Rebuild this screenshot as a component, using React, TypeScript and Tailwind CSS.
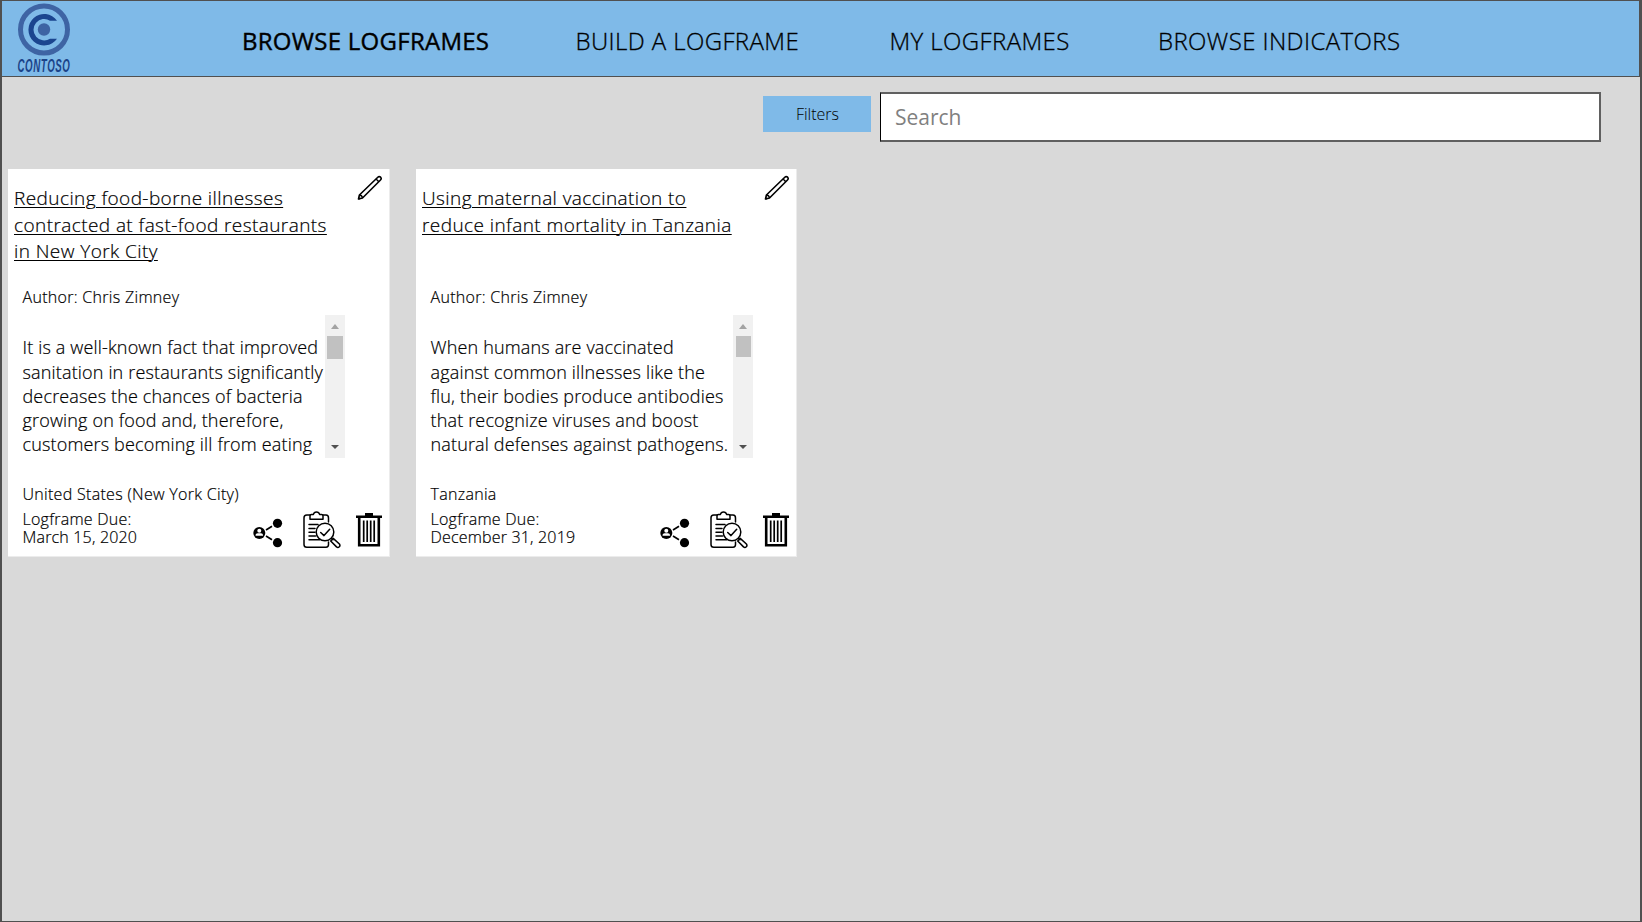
import React from "react";

type Logframe = {
  title: string[];
  author: string;
  description: string[];
  place: string;
  due: string;
  width: string;
  thumb: string;
};

const logframes: Logframe[] = [
  {
    title: ["Reducing food-borne illnesses", "contracted at fast-food restaurants", "in New York City"],
    author: "Chris Zimney",
    description: [
      "It is a well-known fact that improved",
      "sanitation in restaurants significantly",
      "decreases the chances of bacteria",
      "growing on food and, therefore,",
      "customers becoming ill from eating",
    ],
    place: "United States (New York City)",
    due: "March 15, 2020",
    width: "w-[382px]",
    thumb: "h-[23px] w-4",
  },
  {
    title: ["Using maternal vaccination to", "reduce infant mortality in Tanzania"],
    author: "Chris Zimney",
    description: [
      "When humans are vaccinated",
      "against common illnesses like the",
      "flu, their bodies produce antibodies",
      "that recognize viruses and boost",
      "natural defenses against pathogens.",
    ],
    place: "Tanzania",
    due: "December 31, 2019",
    width: "w-[381px]",
    thumb: "h-[21px] w-[15px]",
  },
];

function Logo() {
  return (
    <svg width="58" height="76" viewBox="0 0 58 76" className="block">
      <circle cx="28" cy="28.5" r="23.5" fill="none" stroke="#3e64a4" strokeWidth="5" />
      <path d="M41 19.700A15.700 15.700 0 1 0 41 37.700H34A10.700 10.700 0 1 1 34 19.700Z" fill="#1b458f" />
      <circle cx="28" cy="28.500" r="6.200" fill="#3e64a4" />
      <text transform="translate(1.500 70.500) scale(.54 1)" textLength="97" lengthAdjust="spacing" fontFamily="Liberation Sans" fontWeight="700" fontStyle="italic" fontSize="18" fill="#1b4388">CONTOSO</text>
    </svg>
  );
}

function PencilIcon() {
  return (
    <svg width="26" height="26" viewBox="0 0 26 26" fill="none" stroke="#000" strokeLinejoin="round">
      <path d="M1.500 24 2.400 20 20.800 2.200Q22.200 .9 23.600 2.200 24.900 3.700 23.500 5L5.500 23Z" strokeWidth="1.600" />
      <path d="M2.400 20Q5.100 20.200 5.500 23M19.400 3.600Q20 6.200 22.100 6.300" strokeWidth="1.300" />
      <circle cx="2.300" cy="23.400" r="1" fill="#000" stroke="none" />
    </svg>
  );
}

function ShareIcon() {
  return (
    <svg width="30" height="30" viewBox="0 0 30 30">
      <path d="M13 12 19 8.300M13 18 19 21.700" stroke="#000" strokeWidth="1.700" />
      <circle cx="6.300" cy="15" r="6" />
      <circle cx="6.300" cy="12.700" r="2" fill="#fff" />
      <path d="M2.600 17.800V16.800Q2.800 15.200 4.600 15.200H8Q9.800 15.200 10 16.800V17.800Z" fill="#fff" />
      <circle cx="24.500" cy="5.300" r="4.600" />
      <circle cx="24.500" cy="24.700" r="4.600" />
    </svg>
  );
}

function ReviewIcon() {
  return (
    <svg width="38" height="38" viewBox="0 0 38 38" fill="none" stroke="#000" strokeWidth="1.500" strokeLinecap="round" strokeLinejoin="round">
      <path d="M7 4H3.800Q1 4 1 6.800V33.400Q1 36.200 3.800 36.200H23Q25.500 36.200 25.500 33.600V31M20 4H23Q25.500 4 25.500 7V11" />
      <path d="M7 8.300V4.800Q7 3.400 8.400 3.400H10.400Q11 .9 13.500 .9T16.600 3.400H18.600Q20 3.400 20 4.800V8.300Z" />
      <path d="M6 13.600H15M6 17.500H12M6 21.200H12M6 25H12.500M6 28.800H17" />
      <circle cx="22" cy="21" r="8.800" fill="#fff" />
      <path d="M17.700 21.500 21 24.600 26.700 18.200M28.400 27.300 30 28.700" />
      <path d="M30.200 27.400 36.400 33Q37.500 34.500 36.300 35.800 35 37 33.500 35.900L27.700 30Z" />
    </svg>
  );
}

function TrashIcon() {
  return (
    <svg width="26" height="34" viewBox="0 0 26 34">
      <path d="M0 2.500H9V0H17V2.500H26V5H0Z" />
      <path d="M3.200 5V32.300H22.800V5" fill="none" stroke="#000" strokeWidth="2.600" />
      <path d="M7.700 7.500V29M11.200 7.500V29M14.700 7.500V29M18.200 7.500V29" stroke="#000" strokeWidth="1.700" />
    </svg>
  );
}

function ScrollBar({ thumb }: { thumb: string }) {
  return (
    <div className="flex h-[143px] w-5 flex-col items-center bg-[#f1f1f1]">
      <svg width="10" height="5" viewBox="0 0 10 5" className="mt-[9px] shrink-0">
        <path d="M5 0 9 5H1Z" fill="#a3a3a3" />
      </svg>
      <div className={`mt-[7px] bg-[#c1c1c1] ${thumb}`} />
      <svg width="8" height="4" viewBox="0 0 8 4" className="mt-auto mb-[9px] shrink-0">
        <path d="M0 0H8L4 4Z" fill="#505050" />
      </svg>
    </div>
  );
}

function Card({ item }: { item: Logframe }) {
  return (
    <article className={`flex h-[388px] flex-col border-r border-b border-[#ececec] bg-white ${item.width}`}>
      <div className="flex h-[112px] justify-between">
        <h2 className="pt-[16.300px] pl-[6px] text-[19px] leading-[26.400px] tracking-[0.420px] whitespace-nowrap underline decoration-1 underline-offset-2 [-webkit-text-stroke:0.2px]">
          {item.title.map((line) => (
            <div key={line}>{line}</div>
          ))}
        </h2>
        <button className="mt-[6px] mr-[6.500px] h-[26px] w-[26px]" aria-label="Edit">
          <PencilIcon />
        </button>
      </div>
      <p className="h-[34px] pl-[14.500px] text-[16px] leading-8 tracking-[0.3px] [-webkit-text-stroke:0.2px]">Author: {item.author}</p>
      <div className="flex h-[143px] pl-[14.500px]">
        <p className="w-[302.500px] pt-[20px] text-[18px] leading-[24px] tracking-[0.160px] whitespace-nowrap [-webkit-text-stroke:0.2px]">
          {item.description.map((line) => (
            <span key={line} className="block first:mb-px">{line}</span>
          ))}
        </p>
        <ScrollBar thumb={item.thumb} />
      </div>
      <div className="flex flex-1 justify-between pl-[14.500px]">
        <div className="pt-[26px] text-[16px] leading-[18px] tracking-[0.250px] whitespace-nowrap [-webkit-text-stroke:0.2px]">
          <p className="mb-[7px] pt-px tracking-[0.3px]">{item.place}</p>
          <p>Logframe Due:</p>
          <p className="tracking-[0.180px]">{item.due}</p>
        </div>
        <div className="flex pr-[7px]">
          <button className="mt-[60px] mr-[20px] h-[30px] w-[30px]" aria-label="Share"><ShareIcon /></button>
          <button className="mt-[53px] mr-[15px] h-[38px] w-[38px]" aria-label="Review"><ReviewIcon /></button>
          <button className="mt-[55px] h-[34px] w-[26px]" aria-label="Delete"><TrashIcon /></button>
        </div>
      </div>
    </article>
  );
}

export default function App() {
  return (
    <div className="h-[922px] w-[1642px] overflow-hidden border-x-2 border-y border-[#505050] bg-[#d9d9d9] font-['Open_Sans',sans-serif] font-light text-black">
      <header className="flex h-[76px] border-r border-b border-[#505050] bg-[#7fbae8]">
        <div className="w-[240px] pl-[14px]"><Logo /></div>
        <nav className="flex text-[24px] leading-[80px] tracking-[0.400px] whitespace-nowrap [-webkit-text-stroke:0.3px]">
          <a className="w-[333.500px] font-normal tracking-[0.270px] [-webkit-text-stroke:0.4px]">BROWSE LOGFRAMES</a>
          <a className="w-[314px]">BUILD A LOGFRAME</a>
          <a className="w-[268.500px]">MY LOGFRAMES</a>
          <a>BROWSE INDICATORS</a>
        </nav>
      </header>
      <div className="flex h-[92px] pl-[761px]">
        <button className="mt-[19px] mr-[9px] h-9 w-[108px] bg-[#7fbae8] pl-px text-[16px]">Filters</button>
        <input
          className="mt-[15px] h-[50px] w-[721px] border-2 border-l border-[#606060] border-l-black bg-white pl-[14px] text-[21px] font-normal outline-none placeholder:text-[#808080]"
          placeholder="Search"
        />
      </div>
      <main className="flex gap-[26px] pl-[6px]">
        {logframes.map((item) => (
          <Card key={item.place} item={item} />
        ))}
      </main>
    </div>
  );
}
